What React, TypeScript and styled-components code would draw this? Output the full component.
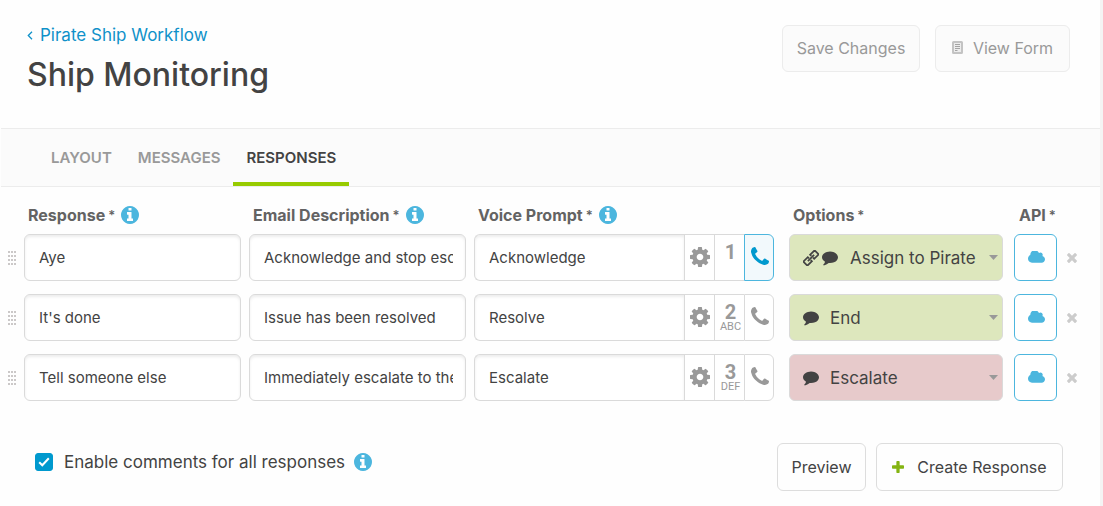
import React, { useState } from "react";
import styled, { createGlobalStyle, css } from "styled-components";

const GlobalStyle = createGlobalStyle`
  *, *::before, *::after { box-sizing: border-box; }
  body {
    margin: 0;
    background: #f4f4f4;
    color: #434343;
    font-family: Inter, "Open Sans", "Liberation Sans", sans-serif;
    font-size: 15px;
    line-height: 20px;
  }
  button, input, select { font: inherit; color: inherit; margin: 0; }
  svg { display: block; flex: none; }
`;

/* ---------- icons ---------- */

type IconProps = { size: number };

const InfoIcon = ({ size }: IconProps) => (
  <svg width={size} height={size} viewBox="128 128 1536 1536" fill="currentColor" aria-hidden="true">
    <path d="M1152 1376v-160q0-14-9-23t-23-9h-96v-512q0-14-9-23t-23-9h-320q-14 0-23 9t-9 23v160q0 14 9 23t23 9h96v320h-96q-14 0-23 9t-9 23v160q0 14 9 23t23 9h448q14 0 23-9t9-23zm-128-896v-160q0-14-9-23t-23-9h-192q-14 0-23 9t-9 23v160q0 14 9 23t23 9h192q14 0 23-9t9-23zm640 416q0 209-103 385.5t-279.5 279.5-385.5 103-385.5-103-279.5-279.5-103-385.5 103-385.5 279.5-279.5 385.5-103 385.5 103 279.5 279.5 103 385.5z" />
  </svg>
);

const CogIcon = ({ size }: IconProps) => (
  <svg width={size} height={size} viewBox="128 128 1536 1536" fill="currentColor" aria-hidden="true">
    <path d="M1152 896q0-106-75-181t-181-75-181 75-75 181 75 181 181 75 181-75 75-181zm512-109v222q0 12-8 23t-20 13l-185 28q-19 54-39 91 35 50 107 138 10 12 10 25t-9 23q-27 37-99 108t-94 71q-12 0-26-9l-138-108q-44 23-91 38-16 136-29 186-7 28-36 28h-222q-14 0-24.5-8.5t-11.5-21.5l-28-184q-49-16-90-37l-141 107q-10 9-25 9-14 0-25-11-126-114-165-168-7-10-7-23 0-12 8-23 15-21 51-66.5t54-70.5q-27-50-41-99l-183-27q-13-2-21-12.5t-8-23.5v-222q0-12 8-23t19-13l186-28q14-46 39-92-40-57-107-138-10-12-10-24 0-10 9-23 26-36 98.5-107.5t94.5-71.5q13 0 26 10l138 107q44-23 91-38 16-136 29-186 7-28 36-28h222q14 0 24.5 8.5t11.5 21.5l28 184q49 16 90 37l142-107q9-9 24-9 13 0 25 10 129 119 165 170 7 8 7 22 0 12-8 23-15 21-51 66.5t-54 70.5q26 50 41 98l183 28q13 2 21 12.5t8 23.5z" />
  </svg>
);

const PhoneIcon = ({ size }: IconProps) => (
  <svg width={size} height={size} viewBox="0 128 1408 1408" fill="currentColor" aria-hidden="true">
    <path d="M1408 1240q0 27-10 70.5t-21 68.5q-21 50-122 106-94 51-186 51-27 0-53-3.5t-57-12.5-47-14.5-55.5-20.5-49.5-18q-98-35-175-83-127-79-264-216t-216-264q-48-77-83-175-3-9-18-49.5t-20.5-55.5-14.5-47-12.5-57-3.5-53q0-92 51-186 56-101 106-122 25-11 68.5-21t70.5-10q14 0 21 3 18 6 53 76 11 19 30 54t35 63.5 31 53.5q3 4 17.5 25t21.5 35.5 7 28.5q0 20-28.5 50t-62 55-62 53-28.5 46q0 9 5 22.5t8.5 20.5 14 24 11.5 19q76 137 174 235t235 174q2 1 19 11.5t24 14 20.5 8.5 22.5 5q18 0 46-28.5t53-62 55-62 50-28.5q14 0 28.5 7t35.5 21.5 25 17.5q25 15 53.5 31t63.5 35 54 30q70 35 76 53 3 7 3 21z" />
  </svg>
);

const CommentIcon = () => (
  <svg width="16" height="16" viewBox="0 76 1792 1792" fill="currentColor" aria-hidden="true">
    <path d="M1792 896q0 174-120 321.5t-326 233-450 85.5q-70 0-145-8-198 175-460 242-49 14-114 22-17 2-30.5-9t-17.5-29v-1q-3-4-.5-12t2-10 4.5-9.5l6-9 7-8.5 8-9q7-8 31-34.5t34.5-38 31-39.5 32.5-51 27-59 26-76q-157-89-247.5-220t-90.5-281q0-130 71-248.5t191-204.5 286-136.5 348-50.5q244 0 450 85.5t326 233 120 321.5z" />
  </svg>
);

const CloudIcon = () => (
  <svg width="17" height="12" viewBox="64 256 1920 1280" fill="currentColor" aria-hidden="true">
    <path d="M1984 1152q0 159-112.5 271.5t-271.5 112.5h-1088q-185 0-316.5-131.5t-131.5-316.5q0-132 71-241.5t187-163.5q-2-28-2-43 0-212 150-362t362-150q158 0 286.5 88t187.5 230q70-62 166-62 106 0 181 75t75 181q0 75-41 138 129 30 213 134.5t84 239.5z" />
  </svg>
);

const TimesIcon = ({ size }: IconProps) => (
  <svg width={size} height={size} viewBox="302 366 1188 1188" fill="currentColor" aria-hidden="true">
    <path d="M1490 1322q0 40-28 68l-136 136q-28 28-68 28t-68-28l-294-294-294 294q-28 28-68 28t-68-28l-136-136q-28-28-28-68t28-68l294-294-294-294q-28-28-28-68t28-68l136-136q28-28 68-28t68 28l294 294 294-294q28-28 68-28t68 28l136 136q28 28 28 68t-28 68l-294 294 294 294q28 28 28 68z" />
  </svg>
);

const PlusIcon = ({ size }: IconProps) => (
  <svg width={size} height={size} viewBox="192 128 1408 1408" fill="currentColor" aria-hidden="true">
    <path d="M1600 736v192q0 40-28 68t-68 28h-416v416q0 40-28 68t-68 28h-192q-40 0-68-28t-28-68v-416h-416q-40 0-68-28t-28-68v-192q0-40 28-68t68-28h416v-416q0-40 28-68t68-28h192q40 0 68 28t28 68v416h416q40 0 68 28t28 68z" />
  </svg>
);

const LinkIcon = () => (
  <svg width="16" height="16" viewBox="0 0 16 16" fill="none" stroke="currentColor" strokeWidth="1.7" aria-hidden="true">
    <g transform="translate(8 8) rotate(-45)">
      <path d="M-1.6-1.2V-2.9H-8V2.9H-1.6V1.2" />
      <path d="M1.6-1.2V-2.9H8V2.9H1.6V1.2" />
      <path d="M-4.4 0H4.4" />
    </g>
  </svg>
);

const FormIcon = () => (
  <svg width="11" height="13" viewBox="0 0 11 13" fill="none" aria-hidden="true">
    <rect x="1" y="1" width="9" height="11" rx="0.5" fill="#ececec" stroke="#c3c3c3" strokeWidth="2" />
    <path d="M3 3.5h5M3 5.5h5M3 7.5h5M3 9.5h2.5" stroke="#a3a3a3" />
  </svg>
);

const BackIcon = () => (
  <svg width="6" height="9" viewBox="0 0 6 9" fill="none" stroke="currentColor" strokeWidth="1.3" aria-hidden="true">
    <path d="M5 .8 1.3 4.5 5 8.2" />
  </svg>
);

const GripIcon = () => (
  <svg width="8" height="14" viewBox="0 0 8 14" fill="#cbc8c8" aria-hidden="true">
    {[0, 4, 8, 12].map((y) =>
      [0, 3, 6].map((x) => <rect key={`${x}-${y}`} x={x} y={y} width="2" height="2" />)
    )}
  </svg>
);

const CaretIcon = () => (
  <svg width="9" height="5" viewBox="0 0 9 5" fill="#999" aria-hidden="true">
    <path d="M0 0h9L4.5 5z" />
  </svg>
);

/* ---------- page ---------- */

const Page = styled.main`
  margin-right: 3px;
  min-height: 100vh;
  background: #fefefe;
`;

const Header = styled.header`
  display: flex;
  justify-content: space-between;
  align-items: flex-start;
  height: 128px;
  padding: 25px 30px 0 27px;
`;

const BackLink = styled.a`
  display: flex;
  align-items: center;
  gap: 7px;
  color: #0f91c9;
  font-size: 17px;
  text-decoration: none;
`;

const Title = styled.h1`
  margin: 10px 0 0;
  font-size: 32px;
  line-height: 40px;
  font-weight: 500;
`;

const ButtonBar = styled.div<{ $gap: number }>`
  display: flex;
  gap: ${(p) => p.$gap}px;
`;

const Button = styled.button<{ $width: number }>`
  display: flex;
  align-items: center;
  justify-content: center;
  gap: 10px;
  min-width: ${(p) => p.$width}px;
  height: 48px;
  padding: 0 12px;
  border: 1px solid #ddd;
  border-radius: 6px;
  background: #fefefe;
  font-size: 16px;
  white-space: nowrap;

  &:disabled {
    height: 47px;
    padding-bottom: 2px;
    border-color: #ececec;
    background: #fbfbfb;
    color: #999;
  }
`;

const Accent = styled.span`
  margin-right: 3px;
  color: #84b412;
`;

const Tabs = styled.nav`
  display: flex;
  height: 59px;
  padding-left: 37px;
  margin-left: 1px;
  border: solid #ececec;
  border-width: 1px 0;
  background: #fbfbfb;
`;

const Tab = styled.a<{ $active?: boolean }>`
  display: flex;
  align-items: center;
  height: 57px;
  padding: 4px 13px 0;
  border-bottom: 4px solid ${(p) => (p.$active ? "#97cb00" : "transparent")};
  color: ${(p) => (p.$active ? "#434343" : "#999")};
  font-size: 15px;
  font-weight: 600;
  text-decoration: none;
`;

/* ---------- responses ---------- */

const columns = css`
  display: grid;
  grid-template-columns: 16px minmax(0, 217fr) minmax(0, 217fr) minmax(0, 300fr) 221px 46px 35px;
  column-gap: 8px;
  align-items: center;
`;

const HeadRow = styled.div`
  ${columns}
  height: 47px;
  padding-top: 9px;
`;

const HeadCell = styled.div<{ $indent?: number }>`
  display: flex;
  align-items: center;
  gap: 3px;
  padding-left: ${(p) => p.$indent ?? 4}px;
  color: #636363;
  font-size: 16px;
  font-weight: 700;
  white-space: nowrap;
`;

const Required = styled.span`
  font-size: 13px;
  font-weight: 600;
`;

const Info = styled.button`
  display: flex;
  margin-left: 3px;
  padding: 0;
  border: 0;
  background: none;
  color: #4cb6de;
`;

const Rows = styled.div`
  display: grid;
  row-gap: 13px;
`;

const Row = styled.div`
  ${columns}
`;

const Grip = styled.span`
  display: flex;
  justify-content: flex-end;
`;

const fieldBox = css`
  height: 47px;
  border: 1px solid #dadada;
  border-radius: 6px;
`;

const TextField = styled.input`
  ${fieldBox}
  width: 100%;
  min-width: 0;
  padding: 0 12px 0 14px;
  background: #fff;
  box-shadow: inset 0 2px 3px #ededed;
`;

const PromptGroup = styled.div`
  display: flex;

  ${TextField} {
    flex: 1;
    border-right: 0;
    border-radius: 6px 0 0 6px;
  }
`;

const addon = css`
  ${fieldBox}
  display: flex;
  align-items: center;
  justify-content: center;
  width: 30px;
  padding: 0;
  border-right: 0;
  border-radius: 0;
  background: #fff;
  color: #999;
`;

const SettingsButton = styled.button`
  ${addon}
  padding-bottom: 2px;
`;

const KeyLabel = styled.span`
  ${addon}
  flex-direction: column;
  justify-content: flex-start;
  padding-top: 8px;
  padding-left: 2px;
  font-family: Roboto, "Liberation Sans", sans-serif;
  font-size: 11px;
  line-height: 12px;

  b {
    font-size: 20px;
    line-height: 18px;
  }
`;

const CallButton = styled.button<{ $active: boolean }>`
  ${addon}
  padding: 0 0 3px 2px;
  border-right: 1px solid #dadada;
  border-radius: 0 6px 6px 0;
  ${(p) =>
    p.$active &&
    css`
      border-color: #4cb6de;
      background: #f2f9fc;
      color: #0099ce;
    `}
`;

const OptionBox = styled.div`
  position: relative;
  margin-left: 7px;
`;

const OptionSelect = styled.select<{ $tone: string; $wide: boolean }>`
  ${fieldBox}
  width: 100%;
  padding: 0 20px 0 ${(p) => (p.$wide ? 60 : 40)}px;
  appearance: none;
  background: ${(p) => p.$tone};
  font-size: 17px;
`;

const OptionIcons = styled.span`
  position: absolute;
  inset: 0 auto 0 14px;
  display: flex;
  align-items: center;
  gap: 3px;
  pointer-events: none;
`;

const Caret = styled.span`
  position: absolute;
  inset: 0 5px 0 auto;
  display: flex;
  align-items: center;
  pointer-events: none;
`;

const ApiButton = styled.button`
  ${fieldBox}
  display: flex;
  align-items: center;
  justify-content: center;
  width: 43px;
  margin-left: 3px;
  padding: 0 0 1px 2px;
  border-color: #4cb6de;
  background: #fff;
  color: #4cb6de;
`;

const RemoveButton = styled.button`
  display: flex;
  padding: 0 2px;
  border: 0;
  background: none;
  color: #ccc;
`;

const Footer = styled.footer`
  display: flex;
  align-items: center;
  justify-content: space-between;
  padding: 42px 37px 15px 35px;
`;

const CommentSetting = styled.div`
  display: flex;
  align-items: center;
  gap: 6px;
  padding-bottom: 11px;
`;

const CheckLabel = styled.label`
  display: flex;
  align-items: center;
  gap: 11px;
  font-size: 17px;
`;

const CheckBox = styled.span`
  display: grid;
  place-items: center;
  color: #fff;

  > * { grid-area: 1 / 1; }
  svg { pointer-events: none; }
  input:not(:checked) + svg { visibility: hidden; }
`;

const CheckInput = styled.input`
  width: 18px;
  height: 18px;
  appearance: none;
  border: 1px solid #0099ce;
  border-radius: 3px;
  background: #fff;

  &:checked { background: #0099ce; }
`;

const green = "#dde7bd";
const red = "#e7cacb";

const responses = [
  { name: "Aye", email: "Acknowledge and stop escalation", voice: "Acknowledge", digit: "1", letters: "", call: true, option: "Assign to Pirate", tone: green, linked: true },
  { name: "It's done", email: "Issue has been resolved", voice: "Resolve", digit: "2", letters: "ABC", call: false, option: "End", tone: green, linked: false },
  { name: "Tell someone else", email: "Immediately escalate to the next person", voice: "Escalate", digit: "3", letters: "DEF", call: false, option: "Escalate", tone: red, linked: false },
];

type Response = (typeof responses)[number];

function ResponseRow({ item }: { item: Response }) {
  const [call, setCall] = useState(item.call);
  return (
    <Row>
      <Grip><GripIcon /></Grip>
      <TextField aria-label="Response" defaultValue={item.name} />
      <TextField aria-label="Email Description" defaultValue={item.email} />
      <PromptGroup>
        <TextField aria-label="Voice Prompt" defaultValue={item.voice} />
        <SettingsButton type="button" aria-label="Voice settings"><CogIcon size={20} /></SettingsButton>
        <KeyLabel><b>{item.digit}</b>{item.letters}</KeyLabel>
        <CallButton type="button" aria-label="Phone call" aria-pressed={call} $active={call} onClick={() => setCall(!call)}>
          <PhoneIcon size={18} />
        </CallButton>
      </PromptGroup>
      <OptionBox>
        <OptionSelect aria-label="Options" defaultValue={item.option} $tone={item.tone} $wide={item.linked}>
          <option>{item.option}</option>
        </OptionSelect>
        <OptionIcons>
          {item.linked && <LinkIcon />}
          <CommentIcon />
        </OptionIcons>
        <Caret><CaretIcon /></Caret>
      </OptionBox>
      <ApiButton type="button" aria-label="API"><CloudIcon /></ApiButton>
      <RemoveButton type="button" aria-label="Remove response"><TimesIcon size={10} /></RemoveButton>
    </Row>
  );
}

const InfoButton = ({ label }: { label: string }) => (
  <Info type="button" aria-label={label}><InfoIcon size={18} /></Info>
);

export default function App() {
  return (
    <>
      <GlobalStyle />
      <Page>
        <Header>
          <div>
            <BackLink href="#workflow"><BackIcon />Pirate Ship Workflow</BackLink>
            <Title>Ship Monitoring</Title>
          </div>
          <ButtonBar $gap={15}>
            <Button type="button" disabled $width={138}>Save Changes</Button>
            <Button type="button" disabled $width={135}><FormIcon />View Form</Button>
          </ButtonBar>
        </Header>
        <Tabs>
          <Tab href="#layout">LAYOUT</Tab>
          <Tab href="#messages">MESSAGES</Tab>
          <Tab href="#responses" $active>RESPONSES</Tab>
        </Tabs>
        <HeadRow>
          <span />
          <HeadCell>Response<Required>*</Required><InfoButton label="About responses" /></HeadCell>
          <HeadCell>Email Description<Required>*</Required><InfoButton label="About email descriptions" /></HeadCell>
          <HeadCell>Voice Prompt<Required>*</Required><InfoButton label="About voice prompts" /></HeadCell>
          <HeadCell $indent={11}>Options<Required>*</Required></HeadCell>
          <HeadCell $indent={8}>API<Required>*</Required></HeadCell>
        </HeadRow>
        <Rows>
          {responses.map((item) => <ResponseRow key={item.name} item={item} />)}
        </Rows>
        <Footer>
          <CommentSetting>
            <CheckLabel>
              <CheckBox>
                <CheckInput type="checkbox" defaultChecked />
                <svg width="12" height="10" viewBox="0 0 12 10" fill="none" stroke="currentColor" strokeWidth="2" aria-hidden="true">
                  <path d="M1.2 5.2 4.3 8.3 10.8 1.2" />
                </svg>
              </CheckBox>
              Enable comments for all responses
            </CheckLabel>
            <InfoButton label="About comments" />
          </CommentSetting>
          <ButtonBar $gap={10}>
            <Button type="button" $width={89}>Preview</Button>
            <Button type="button" $width={187}><Accent><PlusIcon size={12} /></Accent>Create Response</Button>
          </ButtonBar>
        </Footer>
      </Page>
    </>
  );
}
